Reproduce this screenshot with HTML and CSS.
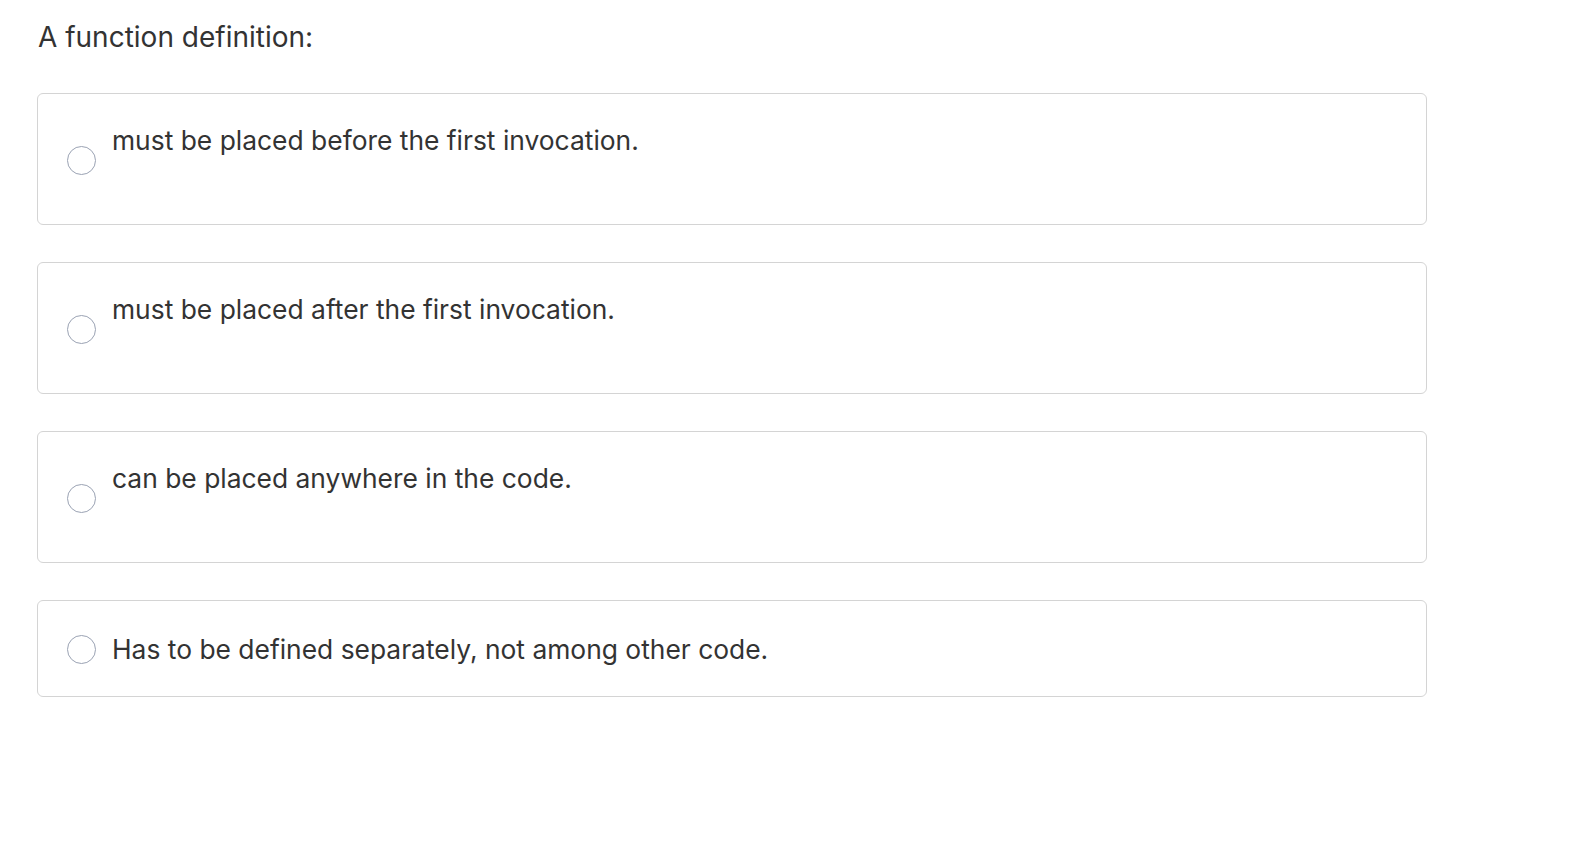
FILE: index.html
```html
<!DOCTYPE html>
<html lang="en">
<head>
<meta charset="utf-8">
<title>Question</title>
<link rel="stylesheet" href="styles.css">
</head>
<body>
<div class="question">
  <div class="prompt">A function definition:</div>
  <div class="options">
    <label class="option tall">
      <span class="radio"></span>
      <span class="body"><span class="text">must be placed before the first invocation.</span><span class="spacer"></span></span>
    </label>
    <label class="option tall">
      <span class="radio"></span>
      <span class="body"><span class="text">must be placed after the first invocation.</span><span class="spacer"></span></span>
    </label>
    <label class="option tall">
      <span class="radio"></span>
      <span class="body"><span class="text">can be placed anywhere in the code.</span><span class="spacer"></span></span>
    </label>
    <label class="option">
      <span class="radio"></span>
      <span class="body"><span class="text">Has to be defined separately, not among other code.</span></span>
    </label>
  </div>
</div>
</body>
</html>
```
FILE: styles.css
```css
html, body {
  margin: 0;
  padding: 0;
  background: #ffffff;
}
body {
  font-family: Inter, "Liberation Sans", Arial, sans-serif;
  color: #333333;
}
.question {
  padding: 18px 169px 0 37px;
}
.prompt {
  font-size: 28px;
  line-height: 38px;
  color: #333333;
  padding-left: 1px;
}
.options {
  margin-top: 37px;
  display: flex;
  flex-direction: column;
  gap: 37px;
}
.option {
  display: flex;
  align-items: center;
  border: 1px solid #d4d4d4;
  border-radius: 6px;
  padding: 28px 28px 26px 29px;
  cursor: pointer;
}
.option.tall {
  padding-top: 26px;
  padding-bottom: 28px;
}
.option.tall .radio {
  margin-top: 4px;
}
.radio {
  flex: none;
  width: 27px;
  height: 27px;
  border: 1.5px solid #9aa2b3;
  border-radius: 50%;
  margin-right: 16px;
}
.body {
  display: flex;
  flex-direction: column;
}
.text {
  font-size: 26.4px;
  line-height: 41px;
  color: #333333;
}
.spacer {
  display: block;
  height: 35px;
}
```
